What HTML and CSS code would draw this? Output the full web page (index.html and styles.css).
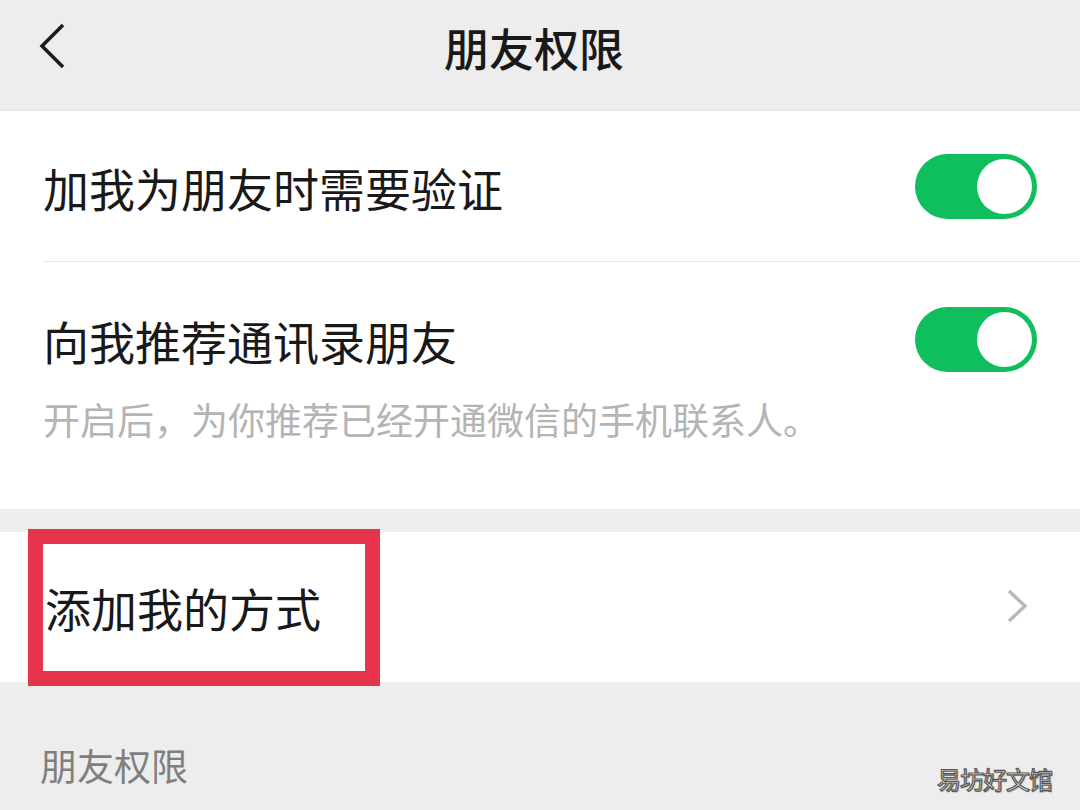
FILE: index.html
```html
<!DOCTYPE html>
<html lang="zh-CN">
<head>
    <meta charset="UTF-8">
    <meta name="viewport" content="width=device-width, initial-scale=1.0">
    <title>朋友权限</title>
    <link rel="stylesheet" href="styles.css">
</head>
<body>
    <header class="nav">
        <span class="nav-back">
            <svg viewBox="0 0 30 50" width="30" height="50"><path d="M25 3 L4 24 L25 45" /></svg>
        </span>
        <h1 class="nav-title">朋友权限</h1>
        <span></span>
    </header>

    <section class="group">
        <div class="row row-divided">
            <span class="row-label">加我为朋友时需要验证</span>
            <span class="switch on"><span class="knob"></span></span>
        </div>
        <div class="cell">
            <div class="cell-main">
                <span class="row-label">向我推荐通讯录朋友</span>
                <span class="switch on"><span class="knob"></span></span>
            </div>
            <p class="cell-tip">开启后，为你推荐已经开通微信的手机联系人。</p>
        </div>
    </section>

    <section class="group group-gap">
        <div class="row row-link">
            <span class="row-label">添加我的方式</span>
            <svg class="arrow" viewBox="0 0 24 40" width="24" height="40"><path d="M4 4 L20 19 L4 34" /></svg>
            <!-- annotation box from the screenshot -->
            <span class="mark"></span>
        </div>
    </section>

    <div class="group-title">朋友权限</div>

    <div class="watermark">易坊好文馆</div>
</body>
</html>
```

FILE: styles.css
```css
body {
    margin: 0;
    width: 1080px;
    height: 810px;
    overflow: hidden;
    background-color: #ededed;
    font-family: "Noto Sans CJK SC", "Noto Sans", sans-serif;
    color: #191919;
    position: relative;
}
.nav {
    height: 111px;
    padding-bottom: 16px;
    display: grid;
    grid-template-columns: 1fr auto 1fr;
    align-items: center;
    border-bottom: 1px solid #e2e2e2;
    box-sizing: border-box;
}
.nav-back {
    padding-left: 38px;
    display: flex;
}
.nav-back svg path {
    fill: none;
    stroke: #1a1a1a;
    stroke-width: 3.5;
}
.nav-title {
    margin: 0 0 0 -12px;
    font-size: 45px;
    font-weight: 500;
    line-height: 1;
}
.group {
    background-color: #fff;
}
.group-gap {
    margin-top: 23px;
}
.row {
    height: 151px;
    display: flex;
    align-items: center;
    justify-content: space-between;
    padding: 0 43px;
    position: relative;
}
.row-divided::after {
    content: "";
    position: absolute;
    left: 43px;
    right: 0;
    bottom: 0;
    height: 1px;
    background-color: #e5e5e5;
}
.row-label {
    font-size: 46px;
    line-height: 1;
}
.cell {
    padding: 45px 43px 65px;
}
.cell-main {
    display: flex;
    align-items: center;
    justify-content: space-between;
    height: 65px;
}
.cell-tip {
    margin: 22px 0 0;
    font-size: 37px;
    line-height: 50px;
    color: #b4b4b4;
}
.switch {
    width: 122px;
    height: 65px;
    border-radius: 33px;
    background-color: #0fbe5c;
    display: flex;
    align-items: center;
    justify-content: flex-end;
    padding: 0 5px;
    box-sizing: border-box;
}
.switch .knob {
    width: 55px;
    height: 55px;
    border-radius: 50%;
    background-color: #fff;
}
.row-link {
    height: 150px;
}
.row-link .row-label {
    margin-left: 2px;
}
.arrow {
    margin-right: 8px;
}
.arrow path {
    fill: none;
    stroke: #b8b8b8;
    stroke-width: 3.5;
}
.mark {
    position: absolute;
    left: 28px;
    top: -3px;
    width: 352px;
    height: 157px;
    border: 15px solid #e8344a;
    box-sizing: border-box;
}
.group-title {
    padding: 58px 40px 0;
    font-size: 37px;
    line-height: 50px;
    color: #7f7f7f;
}
.watermark {
    position: absolute;
    right: 28px;
    bottom: 14px;
    font-size: 24px;
    color: #fff;
    -webkit-text-stroke: 1.2px #555;
    text-shadow: 1px 1px 1px #999;
    letter-spacing: -1px;
}
```
